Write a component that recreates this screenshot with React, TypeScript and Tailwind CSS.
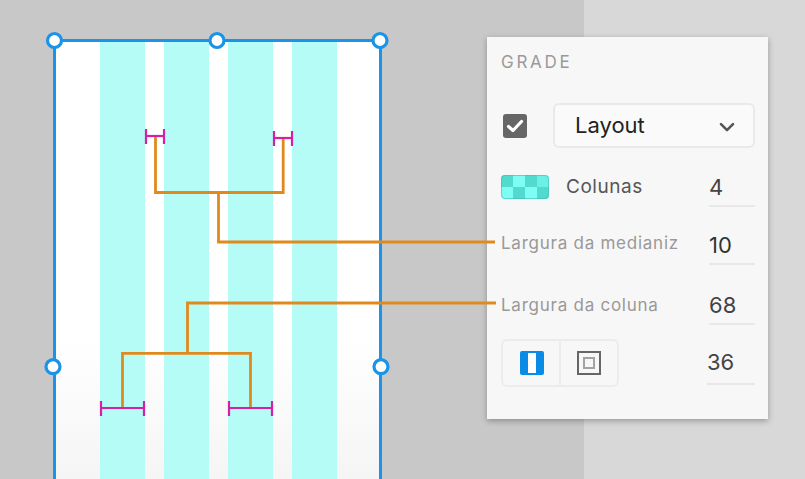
import React from 'react';

const SANS = "font-['Inter','Noto_Sans',sans-serif]";

const Handle = ({ cx, cy }: { cx: number; cy: number }) => (
  <circle cx={cx} cy={cy} r={7} fill="#fff" stroke="#1a94e8" strokeWidth={3.2} />
);

// magenta width marker
const Marker = ({ x1, x2, y }: { x1: number; x2: number; y: number }) => (
  <g stroke="#d61fa8" strokeWidth={2.2} fill="none">
    <path d={`M${x1} ${y}H${x2}`} />
    <path d={`M${x1} ${y - 7}V${y + 8}M${x2} ${y - 7}V${y + 8}`} />
  </g>
);

const Annotations = () => (
  <svg className="absolute inset-0 pointer-events-none" width={805} height={479} viewBox="0 0 805 479">
    <g stroke="#e08a1e" strokeWidth={2.8} fill="none">
      <path d="M155.5 137V192.5H283.2V137" />
      <path d="M218.5 192.5V242H495" />
      <path d="M496 303H187.5V353.3" />
      <path d="M122.5 407V353.3H250.5V407" />
    </g>
    <Marker x1={146} x2={164} y={136} />
    <Marker x1={274} x2={292} y={138} />
    <Marker x1={101} x2={144} y={408} />
    <Marker x1={229} x2={272} y={408} />
    <Handle cx={54.5} cy={40.5} />
    <Handle cx={217} cy={40.5} />
    <Handle cx={380} cy={40.5} />
    <Handle cx={53} cy={366.7} />
    <Handle cx={381} cy={366.7} />
  </svg>
);

const Swatch = () => (
  <svg width={48} height={24} viewBox="0 0 48 24" className="shrink-0">
    <defs>
      <clipPath id="sw">
        <rect width={48} height={24} rx={4} />
      </clipPath>
    </defs>
    <g clipPath="url(#sw)">
      <rect width={48} height={24} fill="#7dfdf3" />
      <rect width={12} height={12} fill="#52dacf" />
      <rect x={24} width={12} height={12} fill="#52dacf" />
      <rect x={12} y={12} width={12} height={12} fill="#52dacf" />
      <rect x={36} y={12} width={12} height={12} fill="#52dacf" />
      <rect x={36} width={12} height={12} fill="#6cf0e6" />
    </g>
    <rect x={0.5} y={0.5} width={47} height={23} rx={3.5} fill="none" stroke="#3fbdb4" strokeOpacity={0.6} />
  </svg>
);

const Value = ({ value, className }: { value: string; className?: string }) => (
  <div className={`w-[46px] border-b-2 border-[#e8e8e8] flex text-[22px] leading-none ${className ?? ''}`}>
    {value}
  </div>
);

export default function App() {
  return (
    <div className={`relative w-[805px] h-[479px] overflow-hidden flex bg-[#d8d8d8] ${SANS}`}>
      <div className="w-[584px] h-full bg-[#c8c8c8] pl-[53px] pt-[39px] shrink-0">
        <div className="w-[329px] h-[440px] bg-gradient-to-b from-white from-[68%] to-[#f5f5f5] border-x-[3px] border-t-[3px] border-[#1a94e8] flex gap-[19px] pl-[44px]">
          <div className="w-[45px] bg-[#b5fbf6]" />
          <div className="w-[45px] bg-[#b5fbf6]" />
          <div className="w-[45px] bg-[#b5fbf6]" />
          <div className="w-[45px] bg-[#b5fbf6]" />
        </div>
      </div>

      <div className="absolute left-[487px] top-[37px] w-[281px] h-[382px] bg-[#f7f7f7] shadow-[0_2px_6px_rgba(0,0,0,0.3)] pl-[14px] pr-[13px] flex flex-col">
        <div className="h-[66px] pt-[15px] text-[17px] leading-5 tracking-[2.7px] text-[#9a9a9a]">GRADE</div>

        <div className="h-[45px] flex items-center">
          <div className="ml-[2px] w-[24px] h-[24px] rounded-[3px] bg-[#666666] flex items-center justify-center">
            <svg width={18} height={14} viewBox="0 0 18 14" fill="none">
              <path d="M2.5 7.5L7 11.5L15.5 2.5" stroke="#fff" strokeWidth={3.2} strokeLinecap="round" strokeLinejoin="round" />
            </svg>
          </div>
          <div className="ml-[26px] flex-1 h-[45px] rounded-[6px] border-2 border-[#e9e9e9] bg-[#fafafa] pl-[20px] pr-[18px] flex items-center justify-between text-[22px] text-[#222222]">
            <span>Layout</span>
            <svg width={16} height={11} viewBox="0 0 16 11" fill="none" className="mt-[4px]">
              <path d="M2 2.2L8 8.2L14 2.2" stroke="#555" strokeWidth={2.6} strokeLinecap="round" strokeLinejoin="round" />
            </svg>
          </div>
        </div>

        <div className="mt-[17px] h-[42px] flex items-start justify-between">
          <div className="flex items-center gap-[17px] pt-[10px]">
            <Swatch />
            <span className="text-[19px] leading-6 tracking-[0.55px] text-[#555555]">Colunas</span>
          </div>
          <Value value="4" className="h-[42px] pt-[11px] text-[#444444]" />
        </div>

        <div className="mt-[16px] h-[42px] flex items-start justify-between">
          <span className="pt-[8px] text-[17px] leading-6 tracking-[0.75px] text-[#999999]">Largura da medianiz</span>
          <Value value="10" className="h-[42px] pt-[11px] text-[#333333]" />
        </div>

        <div className="mt-[18px] h-[42px] flex items-start justify-between">
          <span className="pt-[10px] text-[17px] leading-6 tracking-[0.75px] text-[#999999]">Largura da coluna</span>
          <Value value="68" className="h-[42px] pt-[11px] text-[#444444]" />
        </div>

        <div className="mt-[14px] h-[48px] flex items-start justify-between">
          <div className="w-[118px] h-[48px] rounded-[6px] border-2 border-[#ececec] flex">
            <div className="w-[58px] border-r-2 border-[#ececec] flex items-center justify-center pl-[2px]">
              <svg width={24} height={24} viewBox="0 0 24 24">
                <rect width={24} height={24} rx={2} fill="#0a8be6" />
                <rect x={8} y={2} width={8} height={20} fill="#fff" />
              </svg>
            </div>
            <div className="flex-1 flex items-center justify-center">
              <svg width={24} height={24} viewBox="0 0 24 24" fill="none">
                <rect x={1} y={1} width={22} height={22} stroke="#666" strokeWidth={2} />
                <rect x={7} y={7} width={10} height={10} stroke="#a3a3a3" strokeWidth={2} />
              </svg>
            </div>
          </div>
          <Value value="36" className="!w-[48px] h-[46px] pt-[12px] text-[#444444]" />
        </div>
      </div>

      <Annotations />
    </div>
  );
}
